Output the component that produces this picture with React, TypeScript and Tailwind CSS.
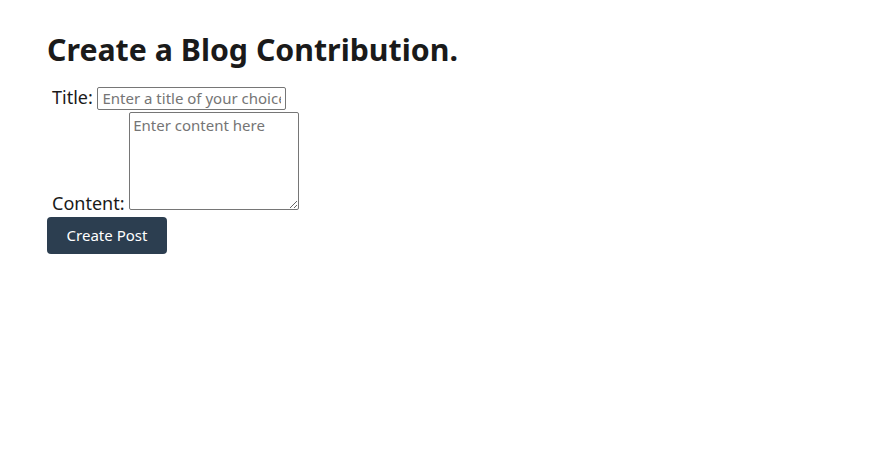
export default function App() {
    return (
        <div className="min-h-screen bg-white px-[47px] pt-[28px] text-[#1a1a1a]" style={{ fontFamily: '"Noto Sans", "Open Sans", sans-serif' }}>
            <h1 className="text-[30.3px] font-bold leading-[44px] mb-[13px]">Create a Blog Contribution.</h1>

            <form className="flex flex-col items-start">
                <div className="pl-[5px] text-[18px] leading-[24px]">
                    <label htmlFor="title">Title:</label>{" "}
                    <input
                        id="title"
                        type="text"
                        placeholder="Enter a title of your choice"
                        className="w-[189px] h-[23px] border border-[#767676] rounded-[2px] px-[4px] text-[15px] placeholder:text-[#757575] align-baseline"
                    />
                </div>

                <div className="pl-[5px] text-[18px] leading-[24px] mt-[2px]">
                    <label htmlFor="content">Content:</label>{" "}
                    <textarea
                        id="content"
                        placeholder="Enter content here"
                        className="w-[170px] h-[98px] border border-[#767676] rounded-[2px] px-[3px] py-[1px] text-[15px] leading-[22px] placeholder:text-[#757575] align-baseline"
                    />
                </div>

                <button type="button" className="mt-[2px] w-[120px] h-[37px] rounded-[4px] bg-[#2c3e50] text-white text-[15px]">
                    Create Post
                </button>
            </form>
        </div>
    );
}
